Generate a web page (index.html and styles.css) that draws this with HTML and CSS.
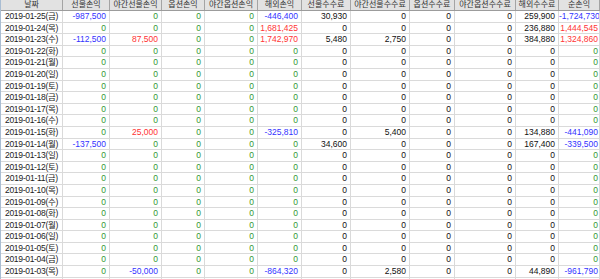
FILE: index.html
```html
<!DOCTYPE html>
<html lang="ko">
<head>
    <meta charset="UTF-8">
    <title>일별손익</title>
    <link rel="stylesheet" href="styles.css">
</head>
<body>
    <div class="grid">
        <div class="row head"><span>날짜</span><span>선물손익</span><span>야간선물손익</span><span>옵션손익</span><span>야간옵션손익</span><span>해외손익</span><span>선물수수료</span><span>야간선물수수료</span><span>옵션수수료</span><span>야간옵션수수료</span><span>해외수수료</span><span>순손익</span></div>
        <div class="row"><span class="d">2019-01-25(금)</span><span class="b">-987,500</span><span class="g">0</span><span class="g">0</span><span class="g">0</span><span class="b">-446,400</span><span>30,930</span><span>0</span><span>0</span><span>0</span><span>259,900</span><span class="b">-1,724,730</span></div>
        <div class="row"><span class="d">2019-01-24(목)</span><span class="g">0</span><span class="g">0</span><span class="g">0</span><span class="g">0</span><span class="r">1,681,425</span><span>0</span><span>0</span><span>0</span><span>0</span><span>236,880</span><span class="r">1,444,545</span></div>
        <div class="row"><span class="d">2019-01-23(수)</span><span class="b">-112,500</span><span class="r">87,500</span><span class="g">0</span><span class="g">0</span><span class="r">1,742,970</span><span>5,480</span><span>2,750</span><span>0</span><span>0</span><span>384,880</span><span class="r">1,324,860</span></div>
        <div class="row"><span class="d">2019-01-22(화)</span><span class="g">0</span><span class="g">0</span><span class="g">0</span><span class="g">0</span><span class="g">0</span><span>0</span><span>0</span><span>0</span><span>0</span><span>0</span><span class="g">0</span></div>
        <div class="row"><span class="d">2019-01-21(월)</span><span class="g">0</span><span class="g">0</span><span class="g">0</span><span class="g">0</span><span class="g">0</span><span>0</span><span>0</span><span>0</span><span>0</span><span>0</span><span class="g">0</span></div>
        <div class="row"><span class="d">2019-01-20(일)</span><span class="g">0</span><span class="g">0</span><span class="g">0</span><span class="g">0</span><span class="g">0</span><span>0</span><span>0</span><span>0</span><span>0</span><span>0</span><span class="g">0</span></div>
        <div class="row"><span class="d">2019-01-19(토)</span><span class="g">0</span><span class="g">0</span><span class="g">0</span><span class="g">0</span><span class="g">0</span><span>0</span><span>0</span><span>0</span><span>0</span><span>0</span><span class="g">0</span></div>
        <div class="row"><span class="d">2019-01-18(금)</span><span class="g">0</span><span class="g">0</span><span class="g">0</span><span class="g">0</span><span class="g">0</span><span>0</span><span>0</span><span>0</span><span>0</span><span>0</span><span class="g">0</span></div>
        <div class="row"><span class="d">2019-01-17(목)</span><span class="g">0</span><span class="g">0</span><span class="g">0</span><span class="g">0</span><span class="g">0</span><span>0</span><span>0</span><span>0</span><span>0</span><span>0</span><span class="g">0</span></div>
        <div class="row"><span class="d">2019-01-16(수)</span><span class="g">0</span><span class="g">0</span><span class="g">0</span><span class="g">0</span><span class="g">0</span><span>0</span><span>0</span><span>0</span><span>0</span><span>0</span><span class="g">0</span></div>
        <div class="row"><span class="d">2019-01-15(화)</span><span class="g">0</span><span class="r">25,000</span><span class="g">0</span><span class="g">0</span><span class="b">-325,810</span><span>0</span><span>5,400</span><span>0</span><span>0</span><span>134,880</span><span class="b">-441,090</span></div>
        <div class="row"><span class="d">2019-01-14(월)</span><span class="b">-137,500</span><span class="g">0</span><span class="g">0</span><span class="g">0</span><span class="g">0</span><span>34,600</span><span>0</span><span>0</span><span>0</span><span>167,400</span><span class="b">-339,500</span></div>
        <div class="row"><span class="d">2019-01-13(일)</span><span class="g">0</span><span class="g">0</span><span class="g">0</span><span class="g">0</span><span class="g">0</span><span>0</span><span>0</span><span>0</span><span>0</span><span>0</span><span class="g">0</span></div>
        <div class="row"><span class="d">2019-01-12(토)</span><span class="g">0</span><span class="g">0</span><span class="g">0</span><span class="g">0</span><span class="g">0</span><span>0</span><span>0</span><span>0</span><span>0</span><span>0</span><span class="g">0</span></div>
        <div class="row"><span class="d">2019-01-11(금)</span><span class="g">0</span><span class="g">0</span><span class="g">0</span><span class="g">0</span><span class="g">0</span><span>0</span><span>0</span><span>0</span><span>0</span><span>0</span><span class="g">0</span></div>
        <div class="row"><span class="d">2019-01-10(목)</span><span class="g">0</span><span class="g">0</span><span class="g">0</span><span class="g">0</span><span class="g">0</span><span>0</span><span>0</span><span>0</span><span>0</span><span>0</span><span class="g">0</span></div>
        <div class="row"><span class="d">2019-01-09(수)</span><span class="g">0</span><span class="g">0</span><span class="g">0</span><span class="g">0</span><span class="g">0</span><span>0</span><span>0</span><span>0</span><span>0</span><span>0</span><span class="g">0</span></div>
        <div class="row"><span class="d">2019-01-08(화)</span><span class="g">0</span><span class="g">0</span><span class="g">0</span><span class="g">0</span><span class="g">0</span><span>0</span><span>0</span><span>0</span><span>0</span><span>0</span><span class="g">0</span></div>
        <div class="row"><span class="d">2019-01-07(월)</span><span class="g">0</span><span class="g">0</span><span class="g">0</span><span class="g">0</span><span class="g">0</span><span>0</span><span>0</span><span>0</span><span>0</span><span>0</span><span class="g">0</span></div>
        <div class="row"><span class="d">2019-01-06(일)</span><span class="g">0</span><span class="g">0</span><span class="g">0</span><span class="g">0</span><span class="g">0</span><span>0</span><span>0</span><span>0</span><span>0</span><span>0</span><span class="g">0</span></div>
        <div class="row"><span class="d">2019-01-05(토)</span><span class="g">0</span><span class="g">0</span><span class="g">0</span><span class="g">0</span><span class="g">0</span><span>0</span><span>0</span><span>0</span><span>0</span><span>0</span><span class="g">0</span></div>
        <div class="row"><span class="d">2019-01-04(금)</span><span class="g">0</span><span class="g">0</span><span class="g">0</span><span class="g">0</span><span class="g">0</span><span>0</span><span>0</span><span>0</span><span>0</span><span>0</span><span class="g">0</span></div>
        <div class="row"><span class="d">2019-01-03(목)</span><span class="g">0</span><span class="b">-50,000</span><span class="g">0</span><span class="g">0</span><span class="b">-864,320</span><span>0</span><span>2,580</span><span>0</span><span>0</span><span>44,890</span><span class="b">-961,790</span></div>
        <div class="row"><span class="d"></span><span></span><span></span><span></span><span></span><span></span><span></span><span></span><span></span><span></span><span></span><span></span></div>
    </div>
</body>
</html>
```

FILE: styles.css
```css
* {
    margin: 0;
    padding: 0;
    box-sizing: border-box;
}

html,
body {
    height: 100%;
    overflow: hidden;
    background: #fff;
}

body {
    font-family: "Liberation Sans", "Noto Sans CJK KR", sans-serif;
    font-size: 8.5px;
    color: #111;
}

.grid {
    display: flex;
    flex-direction: column;
    border-left: 1px solid #a9bdd3;
}

.row {
    display: grid;
    grid-template-columns: 62px 47px 52px 43px 53px 44px 49px 59px 45px 61px 43px 41px;
    height: 11.6px;
    line-height: 11px;
    border-bottom: 1px solid #dadada;
}

.row span {
    text-align: right;
    padding-right: 3px;
    border-right: 1px solid #dadada;
    white-space: nowrap;
    overflow: hidden;
}

.row span:last-child {
    padding-right: 1px;
}

.row .d {
    text-align: center;
    padding-right: 0;
    letter-spacing: -0.3px;
    color: #222;
}

.head {
    height: 11px;
    background: #e2e2e2;
    border-bottom: 1px solid #9c9c9c;
}

.head span,
.head span:last-child {
    text-align: center;
    padding-right: 0;
    font-size: 8px;
    line-height: 10px;
    color: #333;
    border-right: 1px solid #a4a4a4;
}

.b {
    color: #3333ff;
}

.r {
    color: #ff3333;
}

.g {
    color: #339933;
}
```
